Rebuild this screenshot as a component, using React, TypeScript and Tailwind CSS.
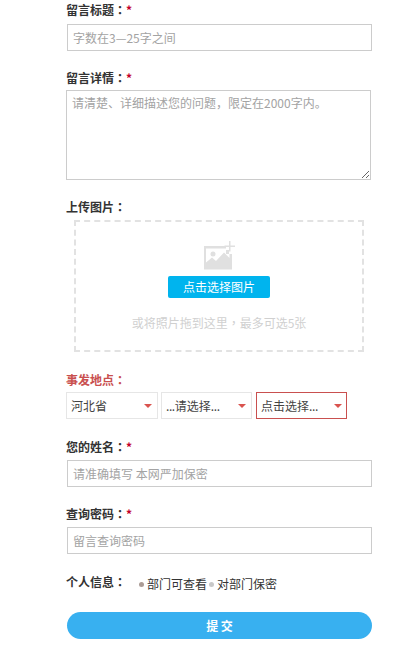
import React from 'react';

const font = { fontFamily: '"Noto Sans CJK SC", "Liberation Sans", sans-serif' };

// TC 字体的全角标点是居中的，和原图一致
function Mark({ children }: { children: string }) {
  return <span className="font-['Noto_Sans_CJK_TC']">{children}</span>;
}

function Label({ text, required, error }: { text: string; required?: boolean; error?: boolean }) {
  return (
    <div className={`h-[20px] text-[12px] leading-[20px] font-bold ${error ? 'text-[#c9504f]' : 'text-[#333]'}`}>
      {text}
      <Mark>：</Mark>
      {required && <span className="text-[#c4002a]">*</span>}
    </div>
  );
}

function TextInput({ placeholder }: { placeholder: string }) {
  return (
    <input
      placeholder={placeholder}
      className="block h-[27px] w-[305px] ml-px border border-[#ccc] bg-white px-[5px] text-[12px] outline-none placeholder:text-[#a3a3a3]"
    />
  );
}

function Picker({ text, width, active, lead }: { text: string; width: string; active?: boolean; lead?: boolean }) {
  return (
    <div
      className={`flex h-[27px] items-center justify-between border pl-[4px] text-[12px] text-[#444] ${width} ${
        active ? 'border-[#c9504f] pr-[4px]' : 'border-[#e6e6e6] pr-[5px]'
      }`}
    >
      <span>
        {lead && <span className="tracking-[-0.4px]">...</span>}
        {text}
        {text !== '河北省' && <span className="tracking-[-0.4px]">...</span>}
      </span>
      <span className="h-0 w-0 border-x-[4px] border-t-[4px] border-x-transparent border-t-[#d9534f]" />
    </div>
  );
}

function ImagePlus() {
  return (
    <svg width="33" height="30" viewBox="0 0 33 30" className="block">
      <path
        fillRule="evenodd"
        fill="#e0e0e0"
        d="M1 5h22v4h3v4h3v15.500H1zM3 7.500v14l6-5 4 3.500 8-8.500 5.500 5.500V13H23V7.500z"
      />
      <circle cx="10" cy="13" r="2.500" fill="#e0e0e0" />
      <path fill="#e0e0e0" d="M26 0h1.500v4.500H32V6h-4.500v4.500H26V6h-4.500V4.500H26z" />
    </svg>
  );
}

function RadioOption({ text, tone }: { text: string; tone: string }) {
  return (
    <span className="flex items-center">
      <span className={`mr-[3px] h-[5px] w-[5px] rounded-full ${tone}`} />
      {text}
    </span>
  );
}

export default function App() {
  return (
    <div style={font} className="h-[659px] w-[418px] bg-white pl-[66px] text-[#333]">
      <Label text="留言标题" required />
      <div className="mt-[4px]">
        <TextInput placeholder="字数在3—25字之间" />
      </div>

      <div className="mt-[17px]">
        <Label text="留言详情" required />
      </div>
      <textarea
        placeholder="请清楚、详细描述您的问题，限定在2000字内。"
        className="mt-[2px] block h-[90px] w-[305px] border border-[#ccc] bg-white px-[5px] py-[3px] text-[12px] outline-none placeholder:text-[#a3a3a3]"
      />

      <div className="mt-[17px]">
        <Label text="上传图片" />
      </div>
      <div className="ml-[8px] mt-[3px] flex h-[132px] w-[290px] flex-col items-center border-2 border-dashed border-[#e2e2e2] pt-[19px]">
        <ImagePlus />
        <button className="mt-[5px] h-[22px] w-[102px] rounded-[2px] bg-[#00b4ee] text-[12px] text-white">
          点击选择图片
        </button>
        <div className="mt-[16px] text-[12px] text-[#d0d0d0]">
          或将照片拖到这里
          <Mark>，</Mark>
          最多可选5张
        </div>
      </div>

      <div className="mt-[18px]">
        <Label text="事发地点" error />
      </div>
      <div className="mt-[2px] flex gap-[3px]">
        <Picker text="河北省" width="w-[92px]" />
        <Picker text="请选择" width="w-[91px]" lead />
        <div className="ml-px">
          <Picker text="点击选择" width="w-[91px]" active />
        </div>
      </div>

      <div className="mt-[18px]">
        <Label text="您的姓名" required />
      </div>
      <div className="mt-[3px]">
        <TextInput placeholder="请准确填写 本网严加保密" />
      </div>

      <div className="mt-[17px]">
        <Label text="查询密码" required />
      </div>
      <div className="mt-[3px]">
        <TextInput placeholder="留言查询密码" />
      </div>

      <div className="mt-[18px] flex h-[20px] items-center text-[12px] leading-[20px]">
        <span className="w-[73px] font-bold">
          个人信息
          <Mark>：</Mark>
        </span>
        <span className="mt-[4px] flex">
          <RadioOption text="部门可查看" tone="bg-[#ab9c96]" />
          <span className="ml-[2px]">
            <RadioOption text="对部门保密" tone="bg-[#c8c8c8]" />
          </span>
        </span>
      </div>

      <button className="ml-px mt-[20px] block h-[27px] w-[305px] rounded-full bg-[#38b0f0] text-[12px] font-bold text-white">
        提 交
      </button>
    </div>
  );
}
